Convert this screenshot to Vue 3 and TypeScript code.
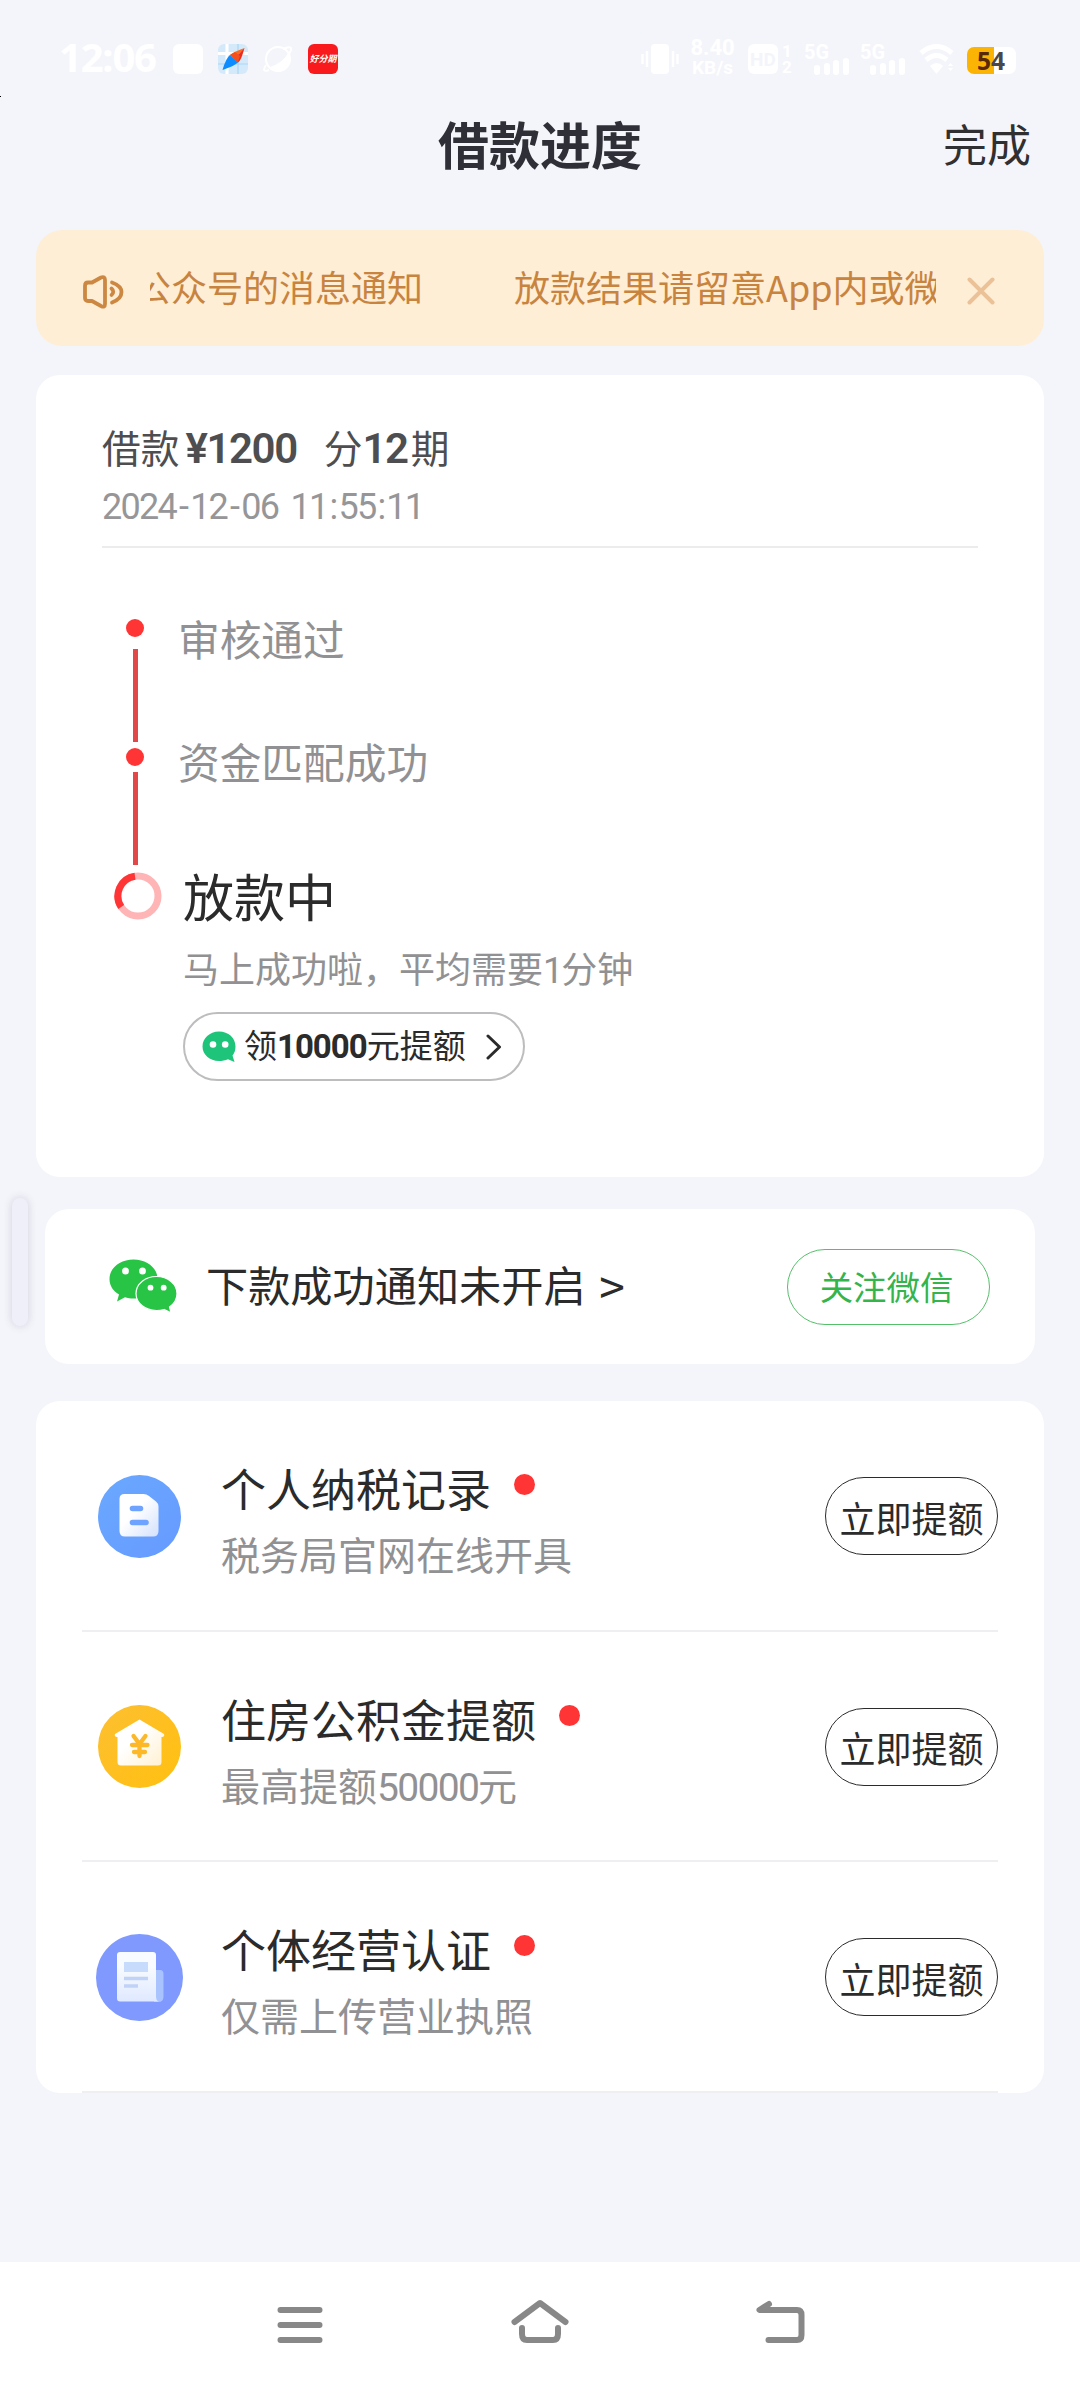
<script setup lang="ts">
interface Offer {
  icon: 'tax' | 'house' | 'license'
  title: string
  desc: string[]
}

const dateParts: string[] = '2024-12-06 11:55:11'.split(/([-: ])/)

const sepClass = (part: string): string => {
  if (part === '-') return 'dash'
  if (part === ':') return 'colon'
  if (part === ' ') return 'space'
  return ''
}

// Odd entries of desc are numeric runs set in the figure face.
const offers: Offer[] = [
  { icon: 'tax', title: '个人纳税记录', desc: ['税务局官网在线开具'] },
  { icon: 'house', title: '住房公积金提额', desc: ['最高提额', '50000', '元'] },
  { icon: 'license', title: '个体经营认证', desc: ['仅需上传营业执照'] },
]
</script>

<template>
  <div class="screen">
    <div class="status">
      <span class="clock">12:06</span>
      <div class="apps">
        <svg width="30" height="30" viewBox="0 0 30 30"><rect width="30" height="30" rx="6" fill="#fff" /></svg>
        <svg width="30" height="30" viewBox="0 0 30 30">
          <rect width="30" height="30" rx="6" fill="#d4eafb" />
          <path d="M9 0V30M0 9.500H30" stroke="#fff" stroke-width="3" />
          <path d="M20 0V30M0 20H30" stroke="#a9d6f7" stroke-width="1.200" />
          <path d="M26.500 4Q15 8 12 11L16 15Z" fill="#ff6a1c" />
          <path d="M26.500 4Q23 17 20 18.500L16 15Z" fill="#ee2c1a" />
          <path d="M12 11L16 15L20 18.500L22 12L17 8Z" fill="#f5501e" />
          <path d="M4.500 26Q8 14 12 11L20 18.500Q16 22 4.500 26Z" fill="#0c8cff" />
        </svg>
        <svg width="30" height="30" viewBox="0 0 30 30">
          <circle cx="15" cy="15" r="12" fill="none" stroke="#fff" stroke-width="2" />
          <path d="M7 23Q20 19 26 8Q30 26 15 28Q10 27 7 23Z" fill="#fff" />
          <path d="M3 21Q-2 29 6 26M20 5Q29 1 28 6Q26 12 20 17" fill="none" stroke="#fff" stroke-width="2" />
        </svg>
        <div class="hfq"><span>好分期</span></div>
      </div>
      <div class="sys">
        <svg class="vib" width="38" height="30" viewBox="0 0 38 30">
          <rect x="10" width="18" height="30" rx="4" fill="#fff" />
          <path d="M1.500 10V20M6 7V23M32 7V23M36.500 10V20" stroke="#fff" stroke-width="2.400" />
        </svg>
        <div class="speed"><span>8.40</span><span>KB/s</span></div>
        <div class="hd">HD</div>
        <div class="sim"><span>1</span><span>2</span></div>
        <div v-for="n in 2" :key="n" class="cell">
          <span>5G</span>
          <svg width="36" height="17" viewBox="0 0 36 17">
            <path d="M3 10V14M13 8V14M22 5V14M32 3V14" stroke="#fff" stroke-width="6" stroke-linecap="round" />
          </svg>
        </div>
        <svg class="wifi" width="36" height="30" viewBox="0 0 36 30">
          <path d="M2 9Q17.500 -4 33 9M7 16Q17.500 7 28 16" fill="none" stroke="#fff" stroke-width="5" />
          <path d="M11 22Q17.500 16 24 22L17.500 30Z" fill="#fff" />
          <path d="M29 22L31.500 19L34 22ZM29 24L31.500 27L34 24Z" fill="#fff" />
        </svg>
        <div class="battery"><span class="lvl">5</span><span>4</span></div>
      </div>
    </div>

    <header class="header">
      <h1>借款进度</h1>
      <a class="done">完成</a>
    </header>

    <section class="notice">
      <svg class="horn" width="42" height="36" viewBox="0 0 42 36" fill="none" stroke="#cc8842" stroke-width="3.800" stroke-linejoin="round" stroke-linecap="round">
        <path d="M3 12Q3 8.500 6 8.500H10L19 3.500Q23 2 23 6V30Q23 34 19 32L10 27H6Q3 27 3 24Z" />
        <path d="M30 8.500Q39.500 12 39.500 18Q39.500 25 30 28.500M29.500 14.500Q33 17.500 29.500 21" />
      </svg>
      <div class="marquee"><span class="old">公众号的消息通知</span><span>放款结果请留意App内或微</span></div>
      <svg class="close" width="28" height="28" viewBox="0 0 28 28"><path d="M2.500 2.500L25.500 25.500M25.500 2.500L2.500 25.500" stroke="#ebc297" stroke-width="4" stroke-linecap="round" /></svg>
    </section>

    <section class="card loan">
      <div class="amount">借款<b class="money">¥1200</b>分<b class="term">12</b>期</div>
      <div class="date"><span v-for="(p, i) in dateParts" :key="i" :class="sepClass(p)">{{ p }}</span></div>
      <div class="rule"></div>
      <div class="progress">
        <div class="rail">
          <i class="dot"></i><i class="line"></i><i class="dot"></i><i class="line second"></i>
          <svg class="ring" width="48" height="48" viewBox="0 0 48 48" fill="none" stroke-width="7">
            <circle cx="24" cy="24" r="20" stroke="#ffb5b5" />
            <path d="M21 4.200A20 20 0 0 0 7.200 35" stroke="#ff3535" />
          </svg>
        </div>
        <div class="steps">
          <div class="step">审核通过</div>
          <div class="step next">资金匹配成功</div>
          <div class="current">放款中</div>
          <div class="hint">马上成功啦，平均需要<span class="one">1</span>分钟</div>
          <div class="pill">
            <svg width="35" height="32" viewBox="0 0 35 32">
              <path d="M17 0.500C26.500 0.500 33.500 7 33.500 15.500C33.500 19 32.500 22 30.500 24.500L32.500 31L26 28.200C23.500 29.300 20 30 17 30C7.500 30 0.500 23.500 0.500 15.500S7.500 0.500 17 0.500Z" fill="#1ec47a" />
              <circle cx="11" cy="13.500" r="3.300" fill="#fff" /><circle cx="23.200" cy="13.500" r="3.300" fill="#fff" />
            </svg>
            <span class="pill-text">领<b>10000</b>元提额</span>
            <svg class="chev" width="16" height="26" viewBox="0 0 16 26"><path d="M2 2L13.500 13L2 24" fill="none" stroke="#2b2b2b" stroke-width="3" stroke-linecap="round" stroke-linejoin="round" /></svg>
          </div>
        </div>
      </div>
    </section>

    <section class="card wechat">
      <svg width="69" height="55" viewBox="0 0 69 55">
        <path d="M24.500 0.500C38 0.500 48.500 9 48.500 20C48.500 31 38 39.500 24.500 39.500C21.500 39.500 18.500 39 16 38.200L8 42.500L10 35.500C4 32 0.500 26.500 0.500 20C0.500 9 11 0.500 24.500 0.500Z" fill="#28c445" />
        <ellipse cx="16.500" cy="12" rx="3.400" ry="3.600" fill="#fff" /><ellipse cx="33.500" cy="12" rx="3.400" ry="3.600" fill="#fff" />
        <path d="M47.500 17.500C59 17.500 68 25 68 34.500C68 40 65.200 44.700 60.500 48L62 53.800L55 50.500C52.500 51.200 50 51.500 47.500 51.500C36 51.500 27 44 27 34.500S36 17.500 47.500 17.500Z" fill="#28c445" stroke="#fff" stroke-width="1.200" />
        <circle cx="41.500" cy="28.700" r="2.900" fill="#fff" /><circle cx="54.700" cy="28.700" r="2.900" fill="#fff" />
      </svg>
      <span class="wechat-text">下款成功通知未开启 <span class="gt">&gt;</span></span>
      <button class="follow">关注微信</button>
    </section>

    <section class="card offers">
      <div v-for="o in offers" :key="o.icon" class="offer">
        <div class="icon">
          <svg v-if="o.icon === 'tax'" width="83" height="83" viewBox="0 0 83 83">
            <defs>
              <linearGradient id="g1" x1="0" y1="0" x2="1" y2="1"><stop offset="0" stop-color="#6aa9ff" /><stop offset="1" stop-color="#669aff" /></linearGradient>
              <linearGradient id="g2" x1="0" y1="0" x2="1" y2="1"><stop offset=".4" stop-color="#fff" /><stop offset="1" stop-color="#d3e1fc" /></linearGradient>
            </defs>
            <circle cx="41.500" cy="41.500" r="41.500" fill="url(#g1)" />
            <path d="M26.500 19H45.500Q48.500 19 51 21L58 26.500Q60.500 28.500 60.500 31.500V56Q60.500 61.500 55 61.500H27Q21.500 61.500 21.500 56V24Q21.500 19 26.500 19Z" fill="url(#g2)" />
            <path d="M34.500 33.500H42.500M34.500 47.500H48" stroke="#6ea4ff" stroke-width="5.600" stroke-linecap="round" />
          </svg>
          <svg v-else-if="o.icon === 'house'" width="83" height="83" viewBox="0 0 83 83">
            <defs>
              <linearGradient id="g3" x1="0" y1="0" x2="1" y2="1"><stop offset="0" stop-color="#fdbf31" /><stop offset="1" stop-color="#ffc010" /></linearGradient>
              <linearGradient id="g4" x1="0" y1="0" x2="1" y2="1"><stop offset=".4" stop-color="#fff" /><stop offset="1" stop-color="#fff0cf" /></linearGradient>
            </defs>
            <circle cx="41.500" cy="41.500" r="41.500" fill="url(#g3)" />
            <path d="M41.500 14.500L66 29Q67 31.500 64 32H63.500V57Q63.500 60.500 60 60.500H23Q19.500 60.500 19.500 57V32H19Q16 31.500 17 29Z" fill="url(#g4)" />
            <path d="M35.500 31L41.500 39L47.500 31M34 40H49.500M36 47H47M41.500 39V51" fill="none" stroke="#fcb826" stroke-width="4.300" stroke-linecap="round" stroke-linejoin="round" />
          </svg>
          <svg v-else width="87" height="87" viewBox="0 0 87 87">
            <defs><linearGradient id="g5" x1="0" y1="0" x2="0" y2="1"><stop offset=".3" stop-color="#f8fbff" /><stop offset="1" stop-color="#dfe9ff" /></linearGradient></defs>
            <circle cx="43.500" cy="43.500" r="43.500" fill="#7f99ff" />
            <path d="M58 36H64Q67.500 36 67.500 40V63Q67.500 68 62 68H58Z" fill="#a9c3ff" />
            <path d="M24 18H57Q60 18 60 21V62Q60 67 63 67.500H24Q21 67.500 21 64.500V21Q21 18 24 18Z" fill="url(#g5)" />
            <rect x="28" y="28" width="24" height="10" fill="#c7dcfc" />
            <path d="M28 44.500H52M28 52H42" stroke="#c1d2f8" stroke-width="3.300" />
          </svg>
        </div>
        <div class="info">
          <div class="name">{{ o.title }}<i class="badge"></i></div>
          <div class="desc"><span v-for="(d, i) in o.desc" :key="i" :class="{ num: i % 2 === 1 }">{{ d }}</span></div>
        </div>
        <button class="raise">立即提额</button>
      </div>
    </section>

    <nav class="nav">
      <svg width="46" height="44" viewBox="0 0 46 44"><path d="M3.500 11H42.500M3.500 26H42.500M3.500 41H42.500" stroke="#888" stroke-width="6" stroke-linecap="round" /></svg>
      <svg width="58" height="44" viewBox="0 0 58 44" fill="none" stroke="#888" stroke-width="6" stroke-linecap="round" stroke-linejoin="round">
        <path d="M3.500 23L29 4L54.500 23M11 29V35Q11 41 16 41H42Q47 41 47 35V29" />
      </svg>
      <svg width="49" height="44" viewBox="0 0 49 44" fill="none" stroke="#888" stroke-width="6" stroke-linecap="round" stroke-linejoin="round">
        <path d="M13 5L3.500 11H41Q45.500 11 45.500 16V36Q45.500 41 41 41H12.500" />
      </svg>
    </nav>

    <div class="handle"></div>
    <div class="speck"></div>
  </div>
</template>

<style>
body {
  background: #f4f5fa;
}
</style>

<style scoped>
.screen {
  position: relative;
  width: 1080px;
  height: 2388px;
  display: flex;
  flex-direction: column;
  overflow: hidden;
  background: #f4f5fa;
  color: #2b2b2b;
  font-family: 'Noto Sans CJK SC', sans-serif;
}
svg {
  display: block;
  flex: none;
}
button {
  padding: 0;
  background: none;
  font-family: inherit;
}
.status {
  height: 100px;
  flex: none;
  display: flex;
  box-sizing: border-box;
  padding: 40px 60px 0 59px;
  color: #fff;
  font-family: Roboto, sans-serif;
  font-weight: 700;
}
.clock {
  width: 114px;
  font-size: 40px;
  line-height: 34px;
  letter-spacing: -1.200px;
  font-family: 'Noto Sans', sans-serif;
}
.apps {
  display: flex;
  gap: 15px;
  margin-top: 4px;
}
.hfq {
  width: 30px;
  height: 30px;
  border-radius: 6px;
  background: #f91a1d;
  display: flex;
  align-items: center;
  justify-content: center;
}
.hfq span {
  flex: none;
  font: italic 700 9px/12px 'Noto Sans CJK SC', sans-serif;
}
.sys {
  display: flex;
  margin-left: auto;
  height: 36px;
}
.vib,
.wifi {
  margin-top: 4px;
}
.speed {
  width: 49px;
  margin-left: 9px;
  display: flex;
  flex-direction: column;
  align-items: center;
  font-size: 22px;
  line-height: 18px;
}
.speed span:first-child {
  margin-top: -1px;
}
.speed span:last-child {
  margin-top: 2px;
  font-size: 19px;
}
.hd {
  width: 30px;
  height: 30px;
  margin: 4px 0 0 11px;
  border-radius: 6px;
  background: #fff;
  color: #f4f5fa;
  font-size: 19px;
  line-height: 31px;
  text-align: center;
}
.sim {
  width: 12px;
  margin: 3px 0 0 4px;
  display: flex;
  flex-direction: column;
  font-size: 17px;
  line-height: 16px;
}
.cell {
  width: 46px;
  margin: 4px 0 0 10px;
  font-size: 20px;
  line-height: 16px;
}
.cell span {
  display: block;
  height: 14px;
}
.cell svg {
  margin-left: 10px;
}
.wifi {
  margin-left: 13px;
}
.battery {
  position: relative;
  width: 49px;
  height: 27px;
  box-sizing: border-box;
  padding-left: 10px;
  margin: 7px 4px 0 12px;
  border-radius: 7px;
  background: linear-gradient(90deg, #fcb404 27px, #fff 27px);
  color: #48484a;
  font: 700 24.500px/27px 'Open Sans', sans-serif;
}
.lvl {
  color: #572a05;
}
.header {
  height: 86px;
  flex: none;
  display: grid;
  grid-template-columns: 1fr auto 1fr;
  align-items: center;
  padding: 0 48px;
}
h1 {
  grid-column: 2;
  margin: 0;
  font-size: 51px;
  line-height: 86px;
  font-weight: 600;
  color: #2f3037;
}
.done {
  justify-self: end;
  margin-right: 1px;
  font-size: 44px;
  color: #303032;
}
.notice {
  height: 116px;
  flex: none;
  display: flex;
  align-items: center;
  margin: 44px 36px 0;
  border-radius: 26px;
  background: #feeed6;
  color: #c8843f;
}
.horn {
  margin: 7px 0 0 46px;
}
.marquee {
  width: 786px;
  height: 60px;
  margin: -5px 0 0 26px;
  display: flex;
  justify-content: flex-end;
  overflow: hidden;
  font-size: 36px;
  line-height: 60px;
  white-space: nowrap;
}
.marquee span {
  flex: none;
  width: 422px;
}
.marquee .old {
  width: auto;
  margin-right: 91px;
}
.close {
  margin: 6px 0 0 31px;
}
.card {
  flex: none;
  box-sizing: border-box;
  background: #fff;
  border-radius: 24px;
}
.loan {
  height: 802px;
  margin: 29px 36px 0;
  padding: 41px 66px 0;
}
.amount {
  height: 60px;
  font-size: 38.700px;
  line-height: 60px;
  color: #4e4e50;
  white-space: nowrap;
}
.amount b {
  font: 600 42px/60px Roboto, sans-serif;
  letter-spacing: -1.400px;
}
.money {
  margin: 0 27px 0 6px;
}
.term {
  margin: 0 3px 0 0;
}
.date {
  height: 50px;
  margin-top: 6px;
  font: 400 36px/50px Roboto, sans-serif;
  letter-spacing: -1.750px;
  color: #969698;
  white-space: pre;
}
.dash {
  margin: 0 3px;
}
.colon {
  margin: 0 2px;
}
.space {
  margin-right: 5px;
}
.rule {
  height: 2px;
  margin-top: 14px;
  background: #ececee;
}
.progress {
  display: flex;
}
.rail {
  width: 66px;
  padding-top: 71px;
  display: flex;
  flex-direction: column;
  align-items: center;
}
.dot {
  width: 18px;
  height: 18px;
  border-radius: 50%;
  background: #ff3535;
}
.line {
  width: 5px;
  height: 93px;
  margin: 12px 0 6px;
  background: #e34848;
}
.line.second {
  margin: 6px 0 7px;
}
.ring {
  margin-left: 5px;
}
.steps {
  padding: 65px 0 0 10px;
}
.step {
  height: 50px;
  font-size: 41.700px;
  line-height: 50px;
  color: #919193;
}
.next {
  margin-top: 73px;
}
.current {
  height: 60px;
  margin: 79px 0 0 5px;
  font-size: 51px;
  line-height: 60px;
}
.hint {
  height: 50px;
  margin: 17px 0 0 5px;
  font-size: 36px;
  line-height: 50px;
  color: #919193;
  white-space: nowrap;
}
.one {
  font: 400 36px/50px Roboto, sans-serif;
  letter-spacing: -2px;
}
.pill {
  width: 342px;
  height: 69px;
  box-sizing: border-box;
  margin: 20px 0 0 5px;
  padding-left: 17px;
  display: flex;
  align-items: center;
  border: 2px solid #bdbdbf;
  border-radius: 35px;
}
.pill-text {
  width: 221px;
  margin: -2px 21px 0 7px;
  font-size: 33px;
  line-height: 60px;
  white-space: nowrap;
}
.pill-text b {
  font: 700 33px/60px Roboto, sans-serif;
  letter-spacing: -1px;
}
.wechat {
  height: 155px;
  margin: 32px 45px 0;
  padding: 0 45px 0 64px;
  display: flex;
  align-items: center;
}
.wechat-text {
  margin: -5px 0 0 28px;
  font-size: 42.200px;
  line-height: 60px;
  white-space: nowrap;
}
.gt {
  margin-left: 4px;
  font-size: 46px;
  line-height: 40px;
  vertical-align: -3px;
}
.follow {
  width: 203px;
  height: 76px;
  box-sizing: border-box;
  margin-left: auto;
  padding: 0 4px 3px 0;
  border: 1.500px solid #55c06a;
  border-radius: 38px;
  color: #35b44c;
  font-size: 33.400px;
}
.offers {
  height: 692px;
  margin: 37px 36px 0;
  padding: 0 46px;
}
.offer {
  height: 230.500px;
  box-sizing: border-box;
  display: flex;
  border-bottom: 2px solid #efeff2;
}
.icon {
  width: 115px;
  height: 230px;
  display: flex;
  align-items: center;
  justify-content: center;
}
.info {
  margin-left: 24px;
  padding-top: 57px;
}
.name {
  height: 60px;
  display: flex;
  font-size: 45px;
  line-height: 60px;
  white-space: nowrap;
}
.badge {
  width: 21px;
  height: 21px;
  margin: 16px 0 0 23px;
  border-radius: 50%;
  background: #ff3535;
}
.desc {
  height: 50px;
  margin-top: 10px;
  font-size: 39px;
  line-height: 50px;
  color: #919193;
  white-space: nowrap;
}
.num {
  font: 400 39px/50px Roboto, sans-serif;
  letter-spacing: -1.700px;
}
.raise {
  width: 173px;
  height: 78px;
  box-sizing: border-box;
  margin: 76px 0 0 auto;
  padding-top: 1px;
  border: 1.500px solid #2b2b2b;
  border-radius: 39px;
  color: #2b2b2b;
  font-size: 36px;
  white-space: nowrap;
}
.nav {
  height: 126px;
  box-sizing: border-box;
  flex: none;
  display: flex;
  justify-content: space-between;
  margin-top: auto;
  padding: 37px 275px 0 277px;
  background: #fff;
}
.handle {
  position: absolute;
  left: 12px;
  top: 1198px;
  width: 16px;
  height: 128px;
  border-radius: 8px;
  background: #efeff9;
  box-shadow: 0 0 8px rgba(70, 70, 110, 0.2);
}
.speck {
  position: absolute;
  left: 0;
  top: 96px;
  width: 1px;
  height: 1px;
  background: #000;
}
</style>
